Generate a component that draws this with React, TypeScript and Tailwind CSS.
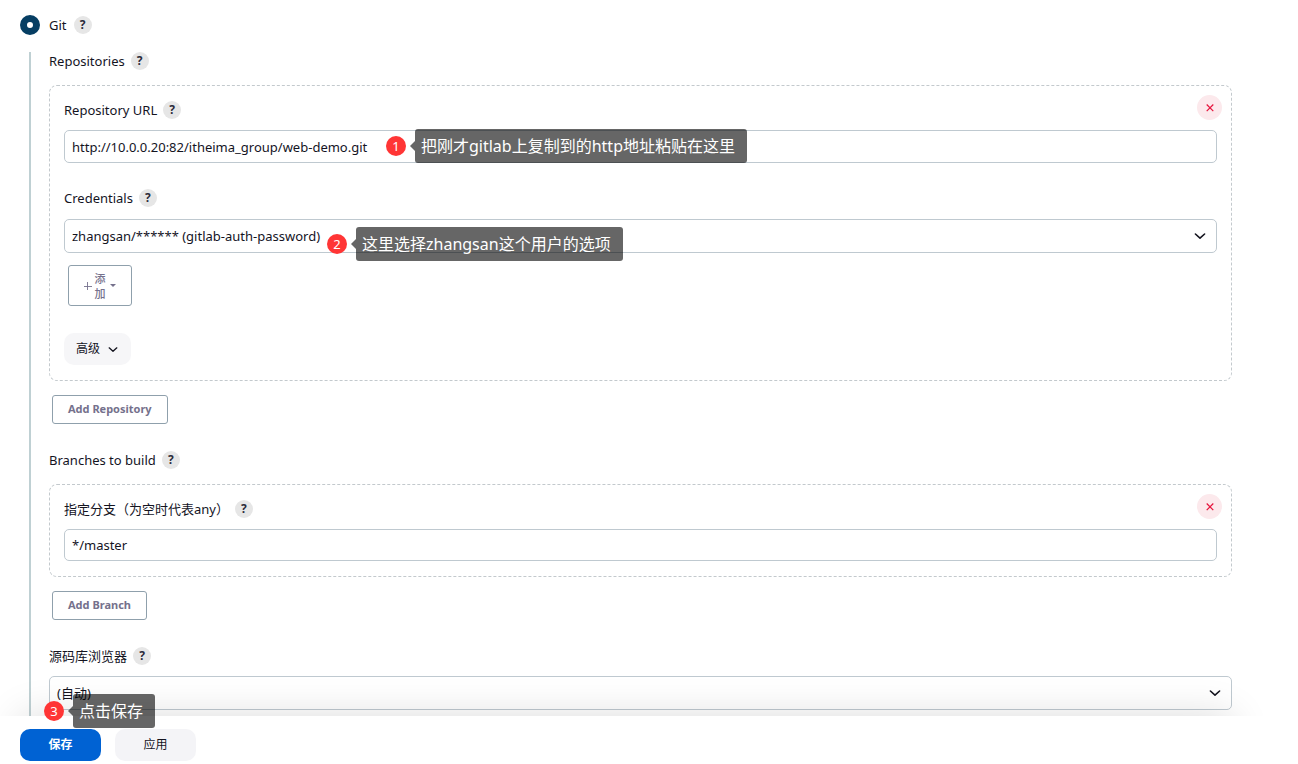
import { useState } from "react";
import type { ReactNode } from "react";

interface FieldLabelProps {
  text: string;
  htmlFor?: string;
}

interface CalloutProps {
  step: number;
  text: string;
  className: string;
}

function HelpButton({ topic }: { topic: string }) {
  return (
    <button
      type="button"
      aria-label={`Help for ${topic}`}
      className="flex size-[18px] shrink-0 items-center justify-center rounded-full bg-[#e6e6e6] text-xs leading-none font-bold text-[#2b2b3a]"
    >
      ?
    </button>
  );
}

function FieldLabel({ text, htmlFor }: FieldLabelProps) {
  return (
    <div className="flex h-[18px] items-center gap-[6px]">
      {htmlFor ? <label htmlFor={htmlFor}>{text}</label> : <span>{text}</span>}
      <HelpButton topic={text} />
    </div>
  );
}

function DeleteButton({ label }: { label: string }) {
  return (
    <button
      type="button"
      aria-label={label}
      className="absolute top-[9px] right-[9px] flex size-[25px] items-center justify-center rounded-full bg-[#fce9ec] text-[#e6143c]"
    >
      <svg className="size-2" viewBox="0 0 8 8" fill="none" stroke="currentColor" strokeWidth="1.2">
        <path d="M0.7 0.5 7.3 7.1M7.3 0.5 0.7 7.1" />
      </svg>
    </button>
  );
}

function Chevron({ className }: { className: string }) {
  return (
    <svg className={className} viewBox="0 0 12 8" fill="none" stroke="currentColor" strokeWidth="1.6">
      <path d="M1.4 2 6 6.2 10.6 2" strokeLinecap="round" strokeLinejoin="round" />
    </svg>
  );
}

function Dropdown({ id, options }: { id: string; options: string[] }) {
  return (
    <div className="relative">
      <select
        id={id}
        className="block h-[34px] w-full appearance-none rounded-[5px] border border-[#bfc9d0] bg-white px-[7px]"
      >
        {options.map((option) => (
          <option key={option}>{option}</option>
        ))}
      </select>
      <Chevron className="pointer-events-none absolute top-[13px] right-[11px] h-2 w-3 text-[#14141f]" />
    </div>
  );
}

function Panel({ children }: { children: ReactNode }) {
  return (
    <div className="relative mt-[15px] rounded-lg border border-dashed border-[#c3c9cd] px-[14px] py-[15px]">
      {children}
    </div>
  );
}

function OutlineButton({ children }: { children: ReactNode }) {
  return (
    <button
      type="button"
      className="mt-[14px] ml-[3px] block h-[29px] rounded-[3px] border border-[#8fa0ac] px-[15px] pb-[2px] text-[11px] font-bold text-[#75718c]"
    >
      {children}
    </button>
  );
}

function Callout({ step, text, className }: CalloutProps) {
  return (
    <div className={`pointer-events-none absolute z-10 flex items-center ${className}`}>
      <span className="flex size-5 items-center justify-center rounded-full bg-[#ff3535] text-[13px] text-white">
        {step}
      </span>
      <span className="ml-1 border-y-[5px] border-r-[5px] border-y-transparent border-r-black/60" />
      <span className="h-[34px] rounded-[3px] bg-black/60 pr-3 pl-[6px] text-base leading-[34px] whitespace-nowrap text-white">
        {text}
      </span>
    </div>
  );
}

export default function App() {
  const [url, setUrl] = useState("http://10.0.0.20:82/itheima_group/web-demo.git");
  const [branch, setBranch] = useState("*/master");

  return (
    <form className="bg-white font-['Noto_Sans','Noto_Sans_CJK_SC',sans-serif] text-[13px] leading-[18px] text-[#14141f]">
      <main className="relative overflow-hidden pt-[15px] pr-[66px]">
        <div className="ml-5 flex h-5 items-center">
          <input
            id="scm-git"
            type="radio"
            name="scm"
            defaultChecked
            className="size-5 appearance-none rounded-full border-[7px] border-[#063e63] bg-white"
          />
          <label htmlFor="scm-git" className="mr-[7px] ml-[9px]">
            Git
          </label>
          <HelpButton topic="Git" />
        </div>

        <div className="mt-[17px] ml-[29px] border-l-2 border-[#bfd0d3] pb-[6px] pl-[18px]">
          <FieldLabel text="Repositories" />
          <Panel>
            <DeleteButton label="Delete repository" />
            <FieldLabel text="Repository URL" htmlFor="repo-url" />
            <div className="relative mt-[11px]">
              <input
                id="repo-url"
                type="text"
                value={url}
                onChange={(e) => setUrl(e.target.value)}
                className="block h-[33px] w-full rounded-[5px] border border-[#bfc9d0] px-[7px]"
              />
              <Callout step={1} text="把刚才gitlab上复制到的http地址粘贴在这里" className="-top-px left-[322px]" />
            </div>

            <div className="mt-[26px]">
              <FieldLabel text="Credentials" htmlFor="credentials" />
            </div>
            <div className="relative mt-3">
              <Dropdown id="credentials" options={["zhangsan/****** (gitlab-auth-password)"]} />
              <Callout step={2} text="这里选择zhangsan这个用户的选项" className="top-2 left-[263px]" />
            </div>

            <button
              type="button"
              className="mt-3 ml-1 flex h-[41px] w-16 items-center justify-center rounded-[3px] border border-[#8fa0ac] text-[11px] leading-[15px] font-medium text-[#75718c]"
            >
              <svg className="mr-[2px] size-2" viewBox="0 0 8 8" stroke="currentColor">
                <path d="M3.5 0V8M0 4.5H8" strokeWidth="0.9" />
              </svg>
              <span className="w-3">添加</span>
              <span className="ml-1 border-x-[3px] border-t-[3px] border-x-transparent border-t-[#75718c]" />
            </button>

            <button
              type="button"
              className="mt-[27px] flex h-8 items-center gap-2 rounded-[10px] bg-[#f6f6f8] pr-[13px] pl-3 text-xs"
            >
              高级
              <Chevron className="h-[7px] w-[10px]" />
            </button>
          </Panel>
          <OutlineButton>Add Repository</OutlineButton>

          <div className="mt-[27px]">
            <FieldLabel text="Branches to build" />
          </div>
          <Panel>
            <DeleteButton label="Delete branch" />
            <FieldLabel text="指定分支（为空时代表any）" htmlFor="branch" />
            <input
              id="branch"
              type="text"
              value={branch}
              onChange={(e) => setBranch(e.target.value)}
              className="mt-[11px] block h-8 w-full rounded-[5px] border border-[#bfc9d0] px-[7px]"
            />
          </Panel>
          <OutlineButton>Add Branch</OutlineButton>

          <div className="mt-[27px] mb-[11px]">
            <FieldLabel text="源码库浏览器" htmlFor="browser" />
          </div>
          <Dropdown id="browser" options={["(自动)"]} />
        </div>

        {/* soft shade cast upwards by the action bar */}
        <div className="pointer-events-none absolute top-full right-[66px] left-5 h-12 shadow-[0_0_40px_rgba(0,0,0,0.14)]" />
      </main>

      <footer className="relative flex gap-[14px] bg-white pt-[13px] pb-[3px] pl-5">
        <button type="submit" className="h-8 w-[81px] rounded-[10px] bg-[#0062d3] text-xs font-bold text-white">
          保存
        </button>
        <button type="button" className="h-8 w-[81px] rounded-[10px] bg-[#f4f4f7] text-xs">
          应用
        </button>
        <Callout step={3} text="点击保存" className="-top-[22px] left-11" />
      </footer>
    </form>
  );
}
